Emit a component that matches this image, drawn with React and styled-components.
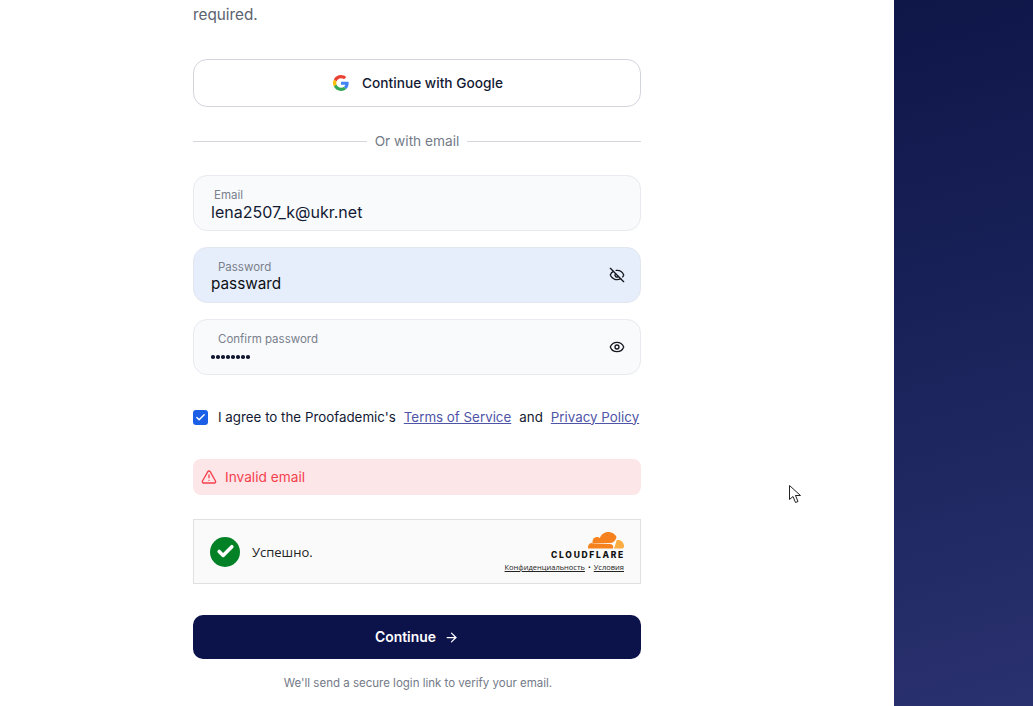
import styled, { createGlobalStyle } from "styled-components";
import { ArrowRight, Check, Eye, EyeOff, TriangleAlert } from "lucide-react";

const GlobalStyle = createGlobalStyle`
  html, body {
    margin: 0;
    height: 100%;
    overflow: hidden;
    background: #ffffff;
    font-family: Inter, "Noto Sans", sans-serif;
  }
  * { box-sizing: border-box; }
`;

function GoogleIcon() {
  return (
    <svg width="16" height="16" viewBox="0 0 48 48">
      <path fill="#EA4335" d="M24 9.5c3.54 0 6.71 1.22 9.21 3.6l6.85-6.85C35.9 2.38 30.47 0 24 0 14.62 0 6.51 5.38 2.56 13.22l7.98 6.19C12.43 13.72 17.74 9.5 24 9.5z" />
      <path fill="#4285F4" d="M46.98 24.55c0-1.57-.15-3.09-.38-4.55H24v9.02h12.94c-.58 2.96-2.26 5.48-4.78 7.18l7.73 6c4.51-4.18 7.09-10.36 7.09-17.65z" />
      <path fill="#FBBC05" d="M10.53 28.59c-.48-1.45-.76-2.99-.76-4.59s.27-3.14.76-4.59l-7.98-6.19C.92 16.46 0 20.12 0 24c0 3.88.92 7.54 2.56 10.78l7.97-6.19z" />
      <path fill="#34A853" d="M24 48c6.48 0 11.93-2.13 15.89-5.81l-7.73-6c-2.15 1.45-4.92 2.3-8.16 2.3-6.26 0-11.57-4.22-13.47-9.91l-7.98 6.19C6.51 42.62 14.62 48 24 48z" />
    </svg>
  );
}

function CloudLogo() {
  return (
    <svg width="36" height="17" viewBox="0 0 36 17">
      <path fill="#fbad41" d="M26 16.5h8.2c.9 0 1.6-.6 1.7-1.4.1-.3.1-.6.1-.9 0-3.400-2.700-6.100-6-6.100-.5 0-1 .1-1.400.2-.6 2.800-1.600 5.600-2.600 8.200z" />
      <path fill="#f6821f" d="M25 16.500c.5-1.300.3-2.500-.4-3.300-.6-.7-1.500-1.100-2.600-1.200L3.400 11.800c-.2 0-.3-.3-.1-.4l19.100-.3c2.200-.1 4.600-1.900 5.400-4.100l.7-1.800C27.300 2.200 24 0 20.300 0c-3.900 0-7.200 2.500-8.400 6-1-.7-2.100-1-3.400-.9C6.400 5.300 4.800 7 4.600 9.100c-.1.500 0 1 .1 1.500C2 10.700 0 13 0 15.700c0 .3 0 .5.100.8h24.900z" />
    </svg>
  );
}

function Cursor() {
  return (
    <svg width="14" height="20" viewBox="0 0 14 20">
      <path d="M1.5 1.500V15.500L5 12.500L7.500 18.500L10 17.500L7.500 11.500H12.500Z" fill="#fff" stroke="#222" strokeWidth="1" />
    </svg>
  );
}

export default function App() {
  return (
    <>
      <GlobalStyle />
      <Page>
        <Main>
          <Form>
            <Intro>required.</Intro>
            <GoogleButton type="button">
              <GoogleIcon />
              <span>Continue with Google</span>
            </GoogleButton>
            <Divider><span>Or with email</span></Divider>
            <Fields>
              <Field>
                <FieldText>
                  <FieldLabel $indent={3}>Email</FieldLabel>
                  <FieldValue>lena2507_k@ukr.net</FieldValue>
                </FieldText>
              </Field>
              <Field $filled>
                <FieldText>
                  <FieldLabel $indent={7}>Password</FieldLabel>
                  <FieldValue $filled>passward</FieldValue>
                </FieldText>
                <EyeOff size={16} color="#15171f" strokeWidth={2} />
              </Field>
              <Field>
                <FieldText>
                  <FieldLabel $indent={7}>Confirm password</FieldLabel>
                  <Dots>
                    {Array.from({ length: 8 }).map((_, i) => <i key={i} />)}
                  </Dots>
                </FieldText>
                <Eye size={16} color="#15171f" strokeWidth={2} />
              </Field>
            </Fields>
            <Terms>
              <CheckBox><Check size={11} color="#fff" strokeWidth={3} /></CheckBox>
              <span>I agree to the Proofademic's</span>
              <TermsLink href="#">Terms of Service</TermsLink>
              <span>and</span>
              <TermsLink href="#">Privacy Policy</TermsLink>
            </Terms>
            <Alert>
              <TriangleAlert size={16} strokeWidth={2} />
              <span>Invalid email</span>
            </Alert>
            <Turnstile>
              <Success>
                <SuccessMark><Check size={19} color="#fff" strokeWidth={4.5} /></SuccessMark>
                <SuccessText>Успешно.</SuccessText>
              </Success>
              <Brand>
                <CloudLogo />
                <BrandName>CLOUDFLARE</BrandName>
                <BrandLinks>
                  <a href="#">Конфиденциальность</a>
                  <span>•</span>
                  <a href="#">Условия</a>
                </BrandLinks>
              </Brand>
            </Turnstile>
            <SubmitButton type="button">
              <span>Continue</span>
              <ArrowRight size={15} strokeWidth={2} />
            </SubmitButton>
            <Note>We'll send a secure login link to verify your email.</Note>
          </Form>
          <Pointer><Cursor /></Pointer>
        </Main>
        <SidePanel />
      </Page>
    </>
  );
}

const Page = styled.div`
  display: flex;
  width: 100%;
  height: 706px;
  overflow: hidden;
`;

const Main = styled.main`
  position: relative;
  flex: 1;
  padding: 3px 0 0 193px;
`;

const SidePanel = styled.aside`
  width: 139px;
  background: linear-gradient(165deg, #0f1648 0%, #192259 45%, #2a316f 100%);
`;

const Form = styled.div`
  width: 448px;
  display: flex;
  flex-direction: column;
`;

const Intro = styled.p`
  margin: 0 0 32px;
  font-size: 15.300px;
  line-height: 24px;
  color: #5b6270;
`;

const GoogleButton = styled.button`
  height: 48px;
  display: flex;
  align-items: center;
  justify-content: center;
  gap: 13px;
  padding: 0 0 0 2px;
  border: 1px solid #d3d5de;
  border-radius: 14px;
  background: #fff;
  font: 500 13.700px Inter, sans-serif;
  color: #131a33;
  span { margin-top: -1px; }
`;

const Divider = styled.div`
  display: flex;
  align-items: center;
  gap: 8px;
  height: 20px;
  margin: 24px 0;
  font-size: 13.700px;
  color: #747a88;
  span { margin-top: -1px; }
  &::before, &::after {
    content: "";
    flex: 1;
    height: 1px;
    background: #d3d5de;
  }
`;

const Fields = styled.div`
  display: flex;
  flex-direction: column;
  gap: 16px;
`;

const Field = styled.div`
  height: 56px;
  display: flex;
  align-items: center;
  justify-content: space-between;
  padding: 0 15px 0 17px;
  border: 1px solid ${(p) => (p.$filled ? "#e2e6ef" : "#e8eaef")};
  border-radius: 14px;
  background: ${(p) => (p.$filled ? "#e6eefb" : "#f9fafc")};
`;

const FieldText = styled.div`
  display: flex;
  flex-direction: column;
  padding-top: 1px;
`;

const FieldLabel = styled.label`
  padding-left: ${(p) => p.$indent}px;
  font-size: 11.500px;
  line-height: 16px;
  color: #7a808c;
`;

const FieldValue = styled.div`
  font-size: ${(p) => (p.$filled ? "15.300px" : "16px")};
  line-height: 18px;
  color: ${(p) => (p.$filled ? "#0c0e14" : "#131a33")};
`;

const Dots = styled.div`
  display: flex;
  gap: 1.500px;
  align-items: center;
  height: 18px;
  padding-top: 3px;
  i {
    width: 3.500px;
    height: 3.500px;
    border-radius: 50%;
    background: #131a33;
  }
`;

const Terms = styled.div`
  display: flex;
  align-items: center;
  height: 20px;
  margin: 32px 0;
  font-size: 13.350px;
  color: #131a33;
  white-space: nowrap;
  span { margin-right: 8px; margin-top: -1px; }
`;

const CheckBox = styled.div`
  width: 15px;
  height: 15px;
  margin: 0 10px 0 0;
  display: flex;
  align-items: center;
  justify-content: center;
  border-radius: 3px;
  background: #1a5fe6;
`;

const TermsLink = styled.a`
  margin: -1px 8px 0 0;
  color: #4f55a6;
  text-decoration: underline;
  &:last-child { margin-right: 0; }
`;

const Alert = styled.div`
  height: 36px;
  display: flex;
  align-items: center;
  gap: 8px;
  padding: 0 8px;
  border-radius: 8px;
  background: #fde6e7;
  color: #f43f4e;
  font-size: 13.700px;
  span { margin-top: -1px; }
`;

const Turnstile = styled.div`
  height: 65px;
  margin-top: 24px;
  display: flex;
  align-items: center;
  justify-content: space-between;
  padding: 0 16px;
  border: 1px solid #e0e0e0;
  background: #fafafa;
`;

const Success = styled.div`
  display: flex;
  align-items: center;
  gap: 12px;
`;

const SuccessMark = styled.div`
  width: 30px;
  height: 30px;
  display: flex;
  align-items: center;
  justify-content: center;
  border-radius: 50%;
  background: #038127;
`;

const SuccessText = styled.span`
  font: 13px "Open Sans", "Noto Sans", sans-serif;
  color: #232323;
`;

const Brand = styled.div`
  display: flex;
  flex-direction: column;
  align-items: flex-end;
  margin-top: 1px;
`;

const BrandName = styled.div`
  margin: 1px -1px 0 0;
  font: 800 8.500px/10px Inter, sans-serif;
  letter-spacing: 1.700px;
  color: #111;
`;

const BrandLinks = styled.div`
  display: flex;
  gap: 3px;
  margin-top: 2px;
  font: 7.500px/10px "Open Sans", "Noto Sans", sans-serif;
  color: #232323;
  white-space: nowrap;
  a { color: #232323; text-decoration: underline; }
`;

const SubmitButton = styled.button`
  height: 44px;
  margin-top: 31px;
  display: flex;
  align-items: center;
  justify-content: center;
  gap: 8px;
  padding: 0;
  border: none;
  border-radius: 10px;
  background: #0c124a;
  color: #fff;
  font: 600 13.900px Inter, sans-serif;
  span { margin-top: -1px; }
`;

const Note = styled.p`
  margin: 16px 0 0;
  padding-left: 2px;
  text-align: center;
  font-size: 11.500px;
  line-height: 16px;
  color: #747a88;
`;

const Pointer = styled.div`
  position: absolute;
  left: 788px;
  top: 484px;
  line-height: 0;
`;
